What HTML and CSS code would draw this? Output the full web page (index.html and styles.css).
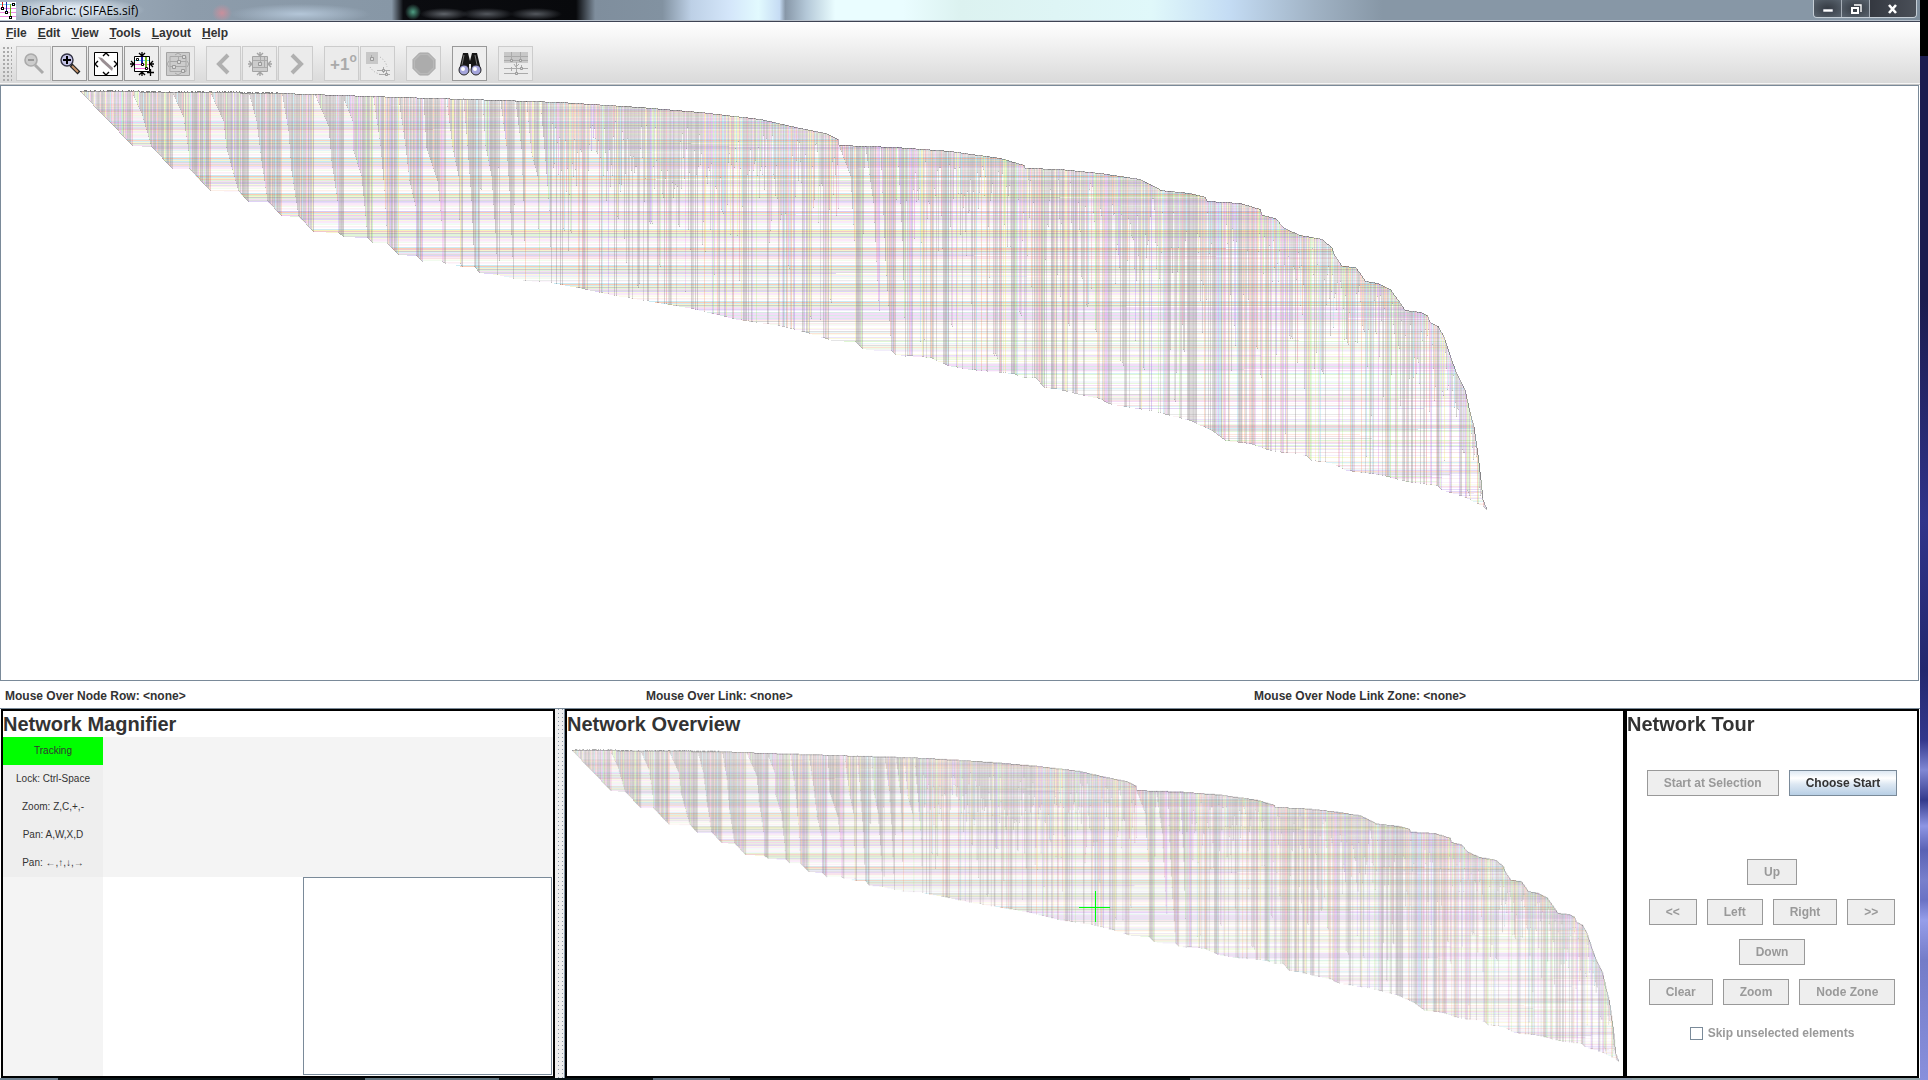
FILE: index.html
```html
<!DOCTYPE html>
<html lang="en">
<head>
<meta charset="utf-8">
<title>BioFabric: (SIFAEs.sif)</title>
<link rel="stylesheet" href="styles.css">
</head>
<body>
<div class="desktop">
  <div class="window">
    <header class="titlebar">
      <svg class="app-icon" viewBox="0 0 16 18" shape-rendering="crispEdges"><path fill="#fff" d="M0 0h16v18H0z"/><path fill="#7fe6f5" d="M0 2h16v1H0z"/><path fill="#f08be0" d="M0 6h16v1H0zM0 10h16v1H0zM0 14h16v1H0z"/><path fill="#c22" d="M2 0h1v6H2z"/><path fill="#22a" d="M6 0h1v10H6z"/><path fill="#6a1" d="M10 2h1v14h-1z"/><path fill="#000" d="M1 5h3v3H1zM5 9h3v3H5zM9 14h3v3H9zM12 1h3v3h-3z"/><path fill="#fff" d="M2 6h1v1H2zM6 10h1v1H6zM10 15h1v1h-1zM13 2h1v1h-1z"/></svg>
      <h1 class="title">BioFabric: (SIFAEs.sif)</h1>
      <div class="caption">
        <button class="cap" aria-label="Minimize"><svg width="12" height="10" viewBox="0 0 12 10"><path d="M1 5h10v3H1z" fill="#fff" stroke="#444a5a" stroke-width=".6"/></svg></button>
        <button class="cap" aria-label="Restore"><svg width="12" height="12" viewBox="0 0 12 12" fill="none"><path d="M4 2h7v7" stroke="#fff" stroke-width="1.4"/><path d="M2 5h6v5H2z" stroke="#fff" stroke-width="2"/></svg></button>
        <button class="cap cap-close" aria-label="Close"><svg width="12" height="10" viewBox="0 0 12 10"><path d="M2 1l7 8M9 1L2 9" stroke="#fff" stroke-width="2.6"/></svg></button>
      </div>
    </header>
    <div class="bars">
      <nav class="menu">
        <a href="#file"><u>F</u>ile</a><a href="#edit"><u>E</u>dit</a><a href="#view"><u>V</u>iew</a><a href="#tools"><u>T</u>ools</a><a href="#layout"><u>L</u>ayout</a><a href="#help"><u>H</u>elp</a>
      </nav>
      <div class="toolbar">
        <span class="grip"></span>
        <div class="tools">
          <button class="tool" disabled aria-label="Zoom out"><svg viewBox="0 0 24 24"><circle cx="9" cy="8" r="6" fill="#ccc" stroke="#aaa" stroke-width="1.6"/><path d="M6 8h6" stroke="#999" stroke-width="2"/><path d="M13 13l8 8" stroke="#aaa" stroke-width="3"/></svg></button>
          <button class="tool" aria-label="Zoom in"><svg viewBox="0 0 24 24"><circle cx="9" cy="8" r="6" fill="#c4c4e8" stroke="#334" stroke-width="1.4"/><path d="M5 8h8M9 4v8" stroke="#000" stroke-width="2"/><path d="M13 13l8 8" stroke="#222" stroke-width="4"/><path d="M14 14l6 6" stroke="#c39268" stroke-width="2"/></svg></button>
          <button class="tool" aria-label="Zoom to all"><svg viewBox="0 0 24 24"><path fill="#fff" stroke="#000" d="M.5 .5h23v23H.5z"/><path d="M4 5l4 1 11 10-1 3L8 10z" fill="#998f93"/><path fill="none" stroke="#000" stroke-width="1.4" d="M9 4l3-3 3 3M9 20l3 3 3-3M4 9l-3 3 3 3M20 9l3 3-3 3"/></svg></button>
          <button class="tool" aria-label="Zoom to model"><svg viewBox="0 0 24 24"><path fill="#fff" stroke="#000" d="M4.500 4.500h15v15h-15z"/><path stroke="#4cd9ee" d="M5 8.500h14"/><path stroke="#ee6fd8" d="M5 12.500h14M5 16.500h14"/><path stroke="#22a" stroke-width="2" d="M12 5v7"/><path stroke="#7b2" stroke-width="2" d="M16 5v12"/><path fill="#fff" stroke="#000" d="M6.500 6.500h2v2h-2zM11.500 11.500h2v2h-2zM15.500 15.500h2v2h-2z"/><path fill="none" stroke="#000" stroke-width="1.300" d="M12 0v4M9 1l3 3 3-3M12 24v-4M9 23l3-3 3 3M0 12h4M1 9l3 3-3 3M24 12h-4M23 9l-3 3 3 3M17 20.500h7M20.500 17v7"/></svg></button>
          <button class="tool" disabled aria-label="Zoom to selected"><svg viewBox="0 0 24 24"><path fill="#ccc" stroke="#a4a4a4" d="M.5 .5h23v23H.5z"/><path fill="none" stroke="#a8a8a8" d="M4 4.500h16v15H4zM4 9.500h16M4 14.500h16M12.500 4v6M9 21l3 2 3-2M9 3l3-2 3 2M3 9l-2 3 2 3M21 9l2 3-2 3"/><path fill="#ddd" stroke="#999" d="M11.500 8.500h3v3h-3zM6.500 13.500h3v3h-3zM16.500 3.500h3v3h-3zM15.500 17.500h3v3h-3z"/></svg></button>
        </div>
        <div class="tools">
          <button class="tool" disabled aria-label="Previous selection"><svg viewBox="0 0 24 24"><path d="M16 3l-9 9 9 9" fill="none" stroke="#b0b0b0" stroke-width="4"/></svg></button>
          <button class="tool" disabled aria-label="Zoom to current selection"><svg viewBox="0 0 24 24"><path fill="#ccc" stroke="#a4a4a4" d="M4.500 4.500h15v15h-15z"/><path fill="none" stroke="#aaa" d="M5 8.500h14M5 15.500h14M12.500 5v7M16.500 5v11"/><path fill="none" stroke="#a4a4a4" stroke-width="1.400" d="M12 0v4M9 1l3 3 3-3M12 24v-4M9 23l3-3 3 3M0 12h4M1 9l3 3-3 3M24 12h-4M23 9l-3 3 3 3"/><path fill="#ddd" stroke="#999" d="M10.500 10.500h3v3h-3z"/></svg></button>
          <button class="tool" disabled aria-label="Next selection"><svg viewBox="0 0 24 24"><path d="M8 3l9 9-9 9" fill="none" stroke="#b0b0b0" stroke-width="4"/></svg></button>
        </div>
        <div class="tools">
          <button class="tool degree" disabled aria-label="Add first neighbors">+1<sup>o</sup></button>
          <button class="tool" disabled aria-label="Propagate down"><svg viewBox="0 0 24 24"><path fill="#c8c8c8" d="M0 0h12v12H0z"/><path fill="none" stroke="#aaa" d="M5.500 3v4M11 18.500h13M13 22.500h11M17.500 15v6M20.500 18v6"/><path fill="#ddd" stroke="#999" d="M4.500 5.500h3v3h-3zM16.500 17.500h2v2h-2zM19.500 21.500h2v2h-2z"/><path d="M14 5q6 4 7 10M4 15q4 6 10 7" fill="none" stroke="#aaa" stroke-dasharray="1 2"/></svg></button>
        </div>
        <div class="tools">
          <button class="tool" disabled aria-label="Cancel"><svg viewBox="0 0 24 24"><path d="M7.500 1h9L23 7.500v9L16.500 23h-9L1 16.500v-9z" fill="#b8b8b8" stroke="#a4a4a4"/><path d="M8.500 3h7l5.500 5.500v7L15.500 21h-7L3 15.500v-7z" fill="#acacac"/></svg></button>
        </div>
        <div class="tools">
          <button class="tool" aria-label="Search"><svg viewBox="0 0 24 24"><path d="M5 1h5l2 8 2-8h5l4 17H13v-6h-2v6H1z" fill="#161616"/><path d="M6 3L4 13M17 3l2 10" stroke="#777"/><circle cx="6" cy="18" r="5" fill="#a5a5dc" stroke="#222"/><circle cx="18" cy="18" r="5" fill="#a5a5dc" stroke="#222"/><circle cx="5" cy="17" r="2" fill="#fff"/><circle cx="17" cy="17" r="2" fill="#fff"/></svg></button>
        </div>
        <div class="tools">
          <button class="tool" disabled aria-label="Compare nodes"><svg viewBox="0 0 24 24"><path fill="#c8c8c8" d="M0 0h24v11H0z"/><path fill="none" stroke="#aaa" d="M0 4.500h24M0 8.500h24M0 16.500h24M0 21.500h24M7.500 0v8M16.500 0v8M12.500 10v12M7.500 15v4M17.500 13v4M10 12l2 3 3-3"/><path fill="#ddd" stroke="#999" d="M6.500 7.500h2v2h-2zM15.500 7.500h2v2h-2zM11.500 20.500h2v2h-2zM16.500 15.500h2v2h-2z"/></svg></button>
        </div>
      </div>
    </div>
    <main class="view"><canvas class="fabric" data-x="79" data-y="5" data-width="1918" data-scale="1" role="img" aria-label="Network"></canvas></main>
    <div class="status"><span>Mouse Over Node Row: &lt;none&gt;</span><span>Mouse Over Link: &lt;none&gt;</span><span>Mouse Over Node Link Zone: &lt;none&gt;</span></div>
    <div class="lower">
      <section class="panel magnifier">
        <h2>Network Magnifier</h2>
        <div class="mag-top">
          <ul class="keys"><li class="tracking">Tracking</li><li>Lock: Ctrl-Space</li><li>Zoom: Z,C,+,-</li><li>Pan: A,W,X,D</li><li>Pan: ←,↑,↓,→</li></ul>
        </div>
        <div class="mag-bottom"><div class="mag-side"></div><div class="mag-detail"></div></div>
      </section>
      <div class="divider"></div>
      <section class="panel overview">
        <h2>Network Overview</h2>
        <div class="plot"><canvas class="fabric" data-x="5" data-y="13" data-width="1056" data-scale="0.744" data-cross="528,170" role="img" aria-label="Network overview"></canvas></div>
      </section>
      <section class="panel tour">
        <h2>Network Tour</h2>
        <div class="row start"><button class="btn" disabled>Start at Selection</button><button class="btn primary">Choose Start</button></div>
        <div class="row"><button class="btn" disabled>Up</button></div>
        <div class="row"><button class="btn" disabled>&lt;&lt;</button><button class="btn" disabled>Left</button><button class="btn" disabled>Right</button><button class="btn" disabled>&gt;&gt;</button></div>
        <div class="row"><button class="btn" disabled>Down</button></div>
        <div class="row"><button class="btn" disabled>Clear</button><button class="btn" disabled>Zoom</button><button class="btn" disabled>Node Zone</button></div>
        <label class="skip"><input type="checkbox" disabled>Skip unselected elements</label>
      </section>
    </div>
    <div class="taskbar"></div>
  </div>
  <div class="wallpaper"></div>
</div>
<script src="fabric.js"></script>
</body>
</html>
```

FILE: styles.css
```css
* { box-sizing: border-box; }
body { margin: 0; font: bold 12px/16px "Liberation Sans", Arial, sans-serif; color: #333; background: #fff; }
button { font: inherit; padding: 0; margin: 0; }
h1, h2, ul { margin: 0; padding: 0; list-style: none; }

.desktop { display: flex; height: 100vh; overflow: hidden; }
.window { flex: 1; min-width: 0; display: flex; flex-direction: column; }
.wallpaper { width: 8px; background: linear-gradient(#000 0 56px, #1c1c4f 56px 300px, #30348a 520px, #23286e 670px, #33388c 740px, #8088d4 770px, #333a8c 800px, #8e96e4 826px, #5a62b4 850px, #7880cc 880px, #6a72c4 900px, #969eea 920px, #747cc8 960px, #8890dc 1080px); }

.titlebar { display: flex; align-items: center; height: 22px; flex: none; border-bottom: 1px solid #3e4454; box-shadow: inset 0 -1px #b9c2cc;
  background:
    radial-gradient(ellipse 70px 12px at 75px 10px, #dce6f0 30%, #dce6f000 100%),
    radial-gradient(ellipse 10px 9px at 222px 13px, #c98f9c, #c98f9c00),
    radial-gradient(ellipse 70px 10px at 300px 14px, #b4c6d8, #b4c6d800),
    radial-gradient(ellipse 8px 8px at 413px 12px, #4f9e83, #4f9e8300),
    radial-gradient(ellipse 24px 6px at 444px 14px, #60646a, #60646a00),
    radial-gradient(ellipse 26px 6px at 487px 14px, #54585e, #54585e00),
    radial-gradient(ellipse 26px 6px at 536px 14px, #54585e, #54585e00),
    linear-gradient(90deg, #a9b8c6 0, #8d9cab 10%, #8797a6 20.400%, #0b0c10 21%, #08090c 30%, #7f8e9d 31%, #8292a1 34.500%, #bdd0e6 36%, #d4e6fa 38%, #e2fafe 39.500%, #c6dcf4 40.600%, #8797a8 40.900%, #b4c8d8 42%, #eafdff 43.500%, #eafdff 47%, #dcf2f0 50%, #e0f8fa 60%, #c4dcf4 64%, #a0b2c4 68.500%, #8797a6 72%, #8797a6 96%, #7c8c9b 100%); }
.app-icon { width: 16px; height: 18px; flex: none; }
.title { margin-left: 5px; font: 12px/18px "Open Sans", "Noto Sans", sans-serif; color: #000; }
.caption { margin-left: auto; margin-right: 3px; align-self: flex-start; display: flex; height: 18px; border: 1px solid #c5ced6; border-top: 0; border-radius: 0 0 4px 4px; overflow: hidden; }
.cap { width: 28px; border: 0; border-right: 1px solid #a5adb6; background: radial-gradient(#343a42, #59636e); display: flex; align-items: center; justify-content: center; }
.cap-close { width: 46px; border-right: 0; background: linear-gradient(90deg, #343840, #4a4f58); }

.bars { flex: none; height: 63px; background: linear-gradient(#fff, #d9d9d9); border-bottom: 1px solid #c4c4c4; box-shadow: inset 0 -1px #f6f6f6; }
.menu { display: flex; gap: 11px; padding: 3px 6px 5px; }
.menu a { color: #333; text-decoration: none; }
.toolbar { display: flex; gap: 11px; }
.grip { width: 10px; height: 35px; margin: 0 -7px 0 2px; background: radial-gradient(circle, #aaa 0 1px, transparent 1px) 0 0 / 4px 4px; }
.tools { display: flex; gap: 1px; }
.tool { width: 35px; height: 35px; padding: 5px 4px 4px 5px; border: 1px solid #999; background: #eee; display: flex; }
.tool:disabled { border-color: #ccc; background: #ebebeb; color: #aaa; }
.tool svg { width: 24px; height: 24px; }
.degree { font-size: 17px; line-height: 26px; padding-right: 0; }
.degree sup { font-size: 12px; line-height: 12px; align-self: flex-start; }

.view { flex: 596 1 0; min-height: 0; border: 1px solid #7a8a99; margin-right: 1px; }
.fabric { display: block; width: 100%; height: 100%; }
.status { flex: none; display: grid; grid-template-columns: 641fr 608fr 666fr; padding: 7px 0 4px 5px; }

.lower { flex: 370 1 0; min-height: 0; display: flex; border-top: 1px solid #7a8a99; }
.panel { border: 2px solid #000; min-width: 0; display: flex; flex-direction: column; }
.panel h2 { font-size: 20px; line-height: 26px; flex: none; }
.magnifier { width: 554px; margin-left: 1px; }
.mag-top { background: #f4f4f4; }
.keys { width: 100px; background: #eee; font-weight: normal; font-size: 10px; line-height: 28px; text-align: center; }
.tracking { background: #0f0; }
.mag-bottom { flex: 1; display: flex; justify-content: space-between; }
.mag-side { width: 100px; background: #f4f4f4; }
.mag-detail { width: 249px; border: 1px solid #7a8a99; margin: 0 1px 1px 0; }
.divider { width: 10px; border-right: 1px solid #7a8a99; background: conic-gradient(from 270deg at 1px 1px, #8a98a6 90deg, transparent 0) 3px 0 / 4px 4px, #eee; }
.overview { flex: 1; }
.plot { flex: 1; min-height: 0; }
.tour { width: 294px; margin-right: 1px; }
.row { display: flex; justify-content: center; gap: 10px; margin-bottom: 14px; }
.start { margin: 33px 0 63px; }
.btn { height: 26px; padding: 0 16px; border: 1px solid #7a8a99; color: #333; }
.btn:disabled { background: #eee; border-color: #999; color: #999; }
.primary { background: linear-gradient(#dde8f3, #fff 30%, #dde8f3 55%, #b8cfe5); }
.skip { display: flex; align-items: center; justify-content: center; gap: 5px; color: #999; margin-top: 6px; }
.skip input { appearance: none; width: 13px; height: 13px; margin: 0; border: 1px solid #7a8a99; background: #fff; }
.taskbar { height: 2px; flex: none; background: linear-gradient(90deg, #6b8090 0 3%, #0a1418 3% 19%, #5e7480 19% 26%, #0a1418 26% 34%, #5c7080 34% 38%, #0a1418 38% 62%, #8d9aab 62% 85%, #8fa3a8 85%); }
```

FILE: fabric.js
```js
// Draws the network: one horizontal line per node, one vertical line per link.
// Model units are pixels of the main view, before the per-canvas offset.
const OX = 80, OY = 91;

// Upper edge of the network.
const ceiling = [[80,91],[200,92],[280,93],[400,97],[500,100],[560,102],[640,107],[700,112],[760,119],[800,128],[825,133],[838,139],
  [839,145],[895,147],[950,151],[1000,158],[1024,165],[1025,168],[1060,169],[1100,173],[1140,179],[1158,188],[1160,190],[1190,193],
  [1205,197],[1207,201],[1240,203],[1260,209],[1262,215],[1275,218],[1284,228],[1300,235],[1322,239],[1332,248],[1334,254],[1340,263],
  [1342,266],[1355,267],[1360,273],[1365,281],[1378,283],[1390,289],[1398,300],[1405,310],[1420,312],[1427,315],[1430,322],[1438,326],
  [1444,337],[1450,355],[1456,372],[1465,390],[1470,412],[1474,427],[1478,455],[1481,480],[1483,500],[1487,509]];

// Lower edge of the network.
const floor = [[80,91],[132,145],[151,146],[172,168],[188,168],[210,190],[238,191],[248,201],[267,201],[281,215],[298,216],[313,231],
  [338,232],[343,236],[367,237],[372,242],[387,243],[398,254],[416,255],[422,261],[442,261],[462,266],[474,266],[479,272],[497,274],
  [525,280],[551,282],[578,287],[615,295],[688,307],[738,319],[780,325],[810,333],[832,340],[855,341],[862,348],[877,350],[891,350],
  [895,354],[930,357],[948,365],[970,369],[1013,373],[1023,377],[1035,377],[1044,387],[1056,388],[1075,393],[1100,398],[1108,403],
  [1155,411],[1190,420],[1212,430],[1225,440],[1250,443],[1270,450],[1306,455],[1311,460],[1330,462],[1347,470],[1380,474],[1406,481],
  [1437,485],[1441,489],[1460,495],[1470,499],[1482,505],[1487,510]];

// Hub nodes: the slanted left edge of each one's links.
const hubs = [[[80,91],[132,145]],
  [[132,93],[141,112],[151,146],[172,168]],
  [[173,94],[183,116],[188,150],[189,168],[210,190]],
  [[211,94],[223,120],[226,147],[233,173],[238,190],[248,201]],
  [[249,94],[256,120],[261,160],[267,200],[281,215]],
  [[282,95],[288,130],[291,170],[298,215],[313,231]],
  [[315,95],[328,125],[331,160],[337,200],[338,232],[343,236]],
  [[343,97],[352,120],[353,150],[361,175],[365,215],[367,237],[372,242]],
  [[373,97],[380,145],[384,190],[387,243],[398,254]],
  [[398,97],[405,145],[409,180],[415,205],[416,255],[422,261]],
  [[423,98],[426,147],[437,180],[441,220],[442,261],[445,263]],
  [[446,98],[452,146],[458,175],[460,263],[462,266]],
  [[463,98],[467,145],[471,200],[474,266],[479,272]],
  [[482,99],[485,145],[491,175],[495,232],[497,274]],
  [[500,100],[506,145],[509,190],[513,278]],
  [[515,100],[521,148],[523,200],[525,280]],
  [[526,101],[531,152],[537,175],[539,281]],
  [[540,101],[545,160],[549,210],[551,282]],
  [[839,146],[850,175],[854,240],[855,341],[862,348]],
  [[865,146],[873,202],[878,300]],
  [[880,146],[885,260],[891,350],[895,354]],
  [[897,147],[902,240],[905,356]]];

// Later nodes with enough links to reach the lower edge as a solid strip.
const strips = [[930,932],[945,948],[1011,1014],[1034,1044],[1051,1056],[1062,1066],[1073,1076],[1105,1108],[1166,1169],[1187,1196],
  [1212,1225],[1237,1242],[1306,1311],[1395,1397],[1411,1412],[1437,1441]];

function at(line, x) {
  for (let i = 1; i < line.length; i++) {
    if (x <= line[i][0]) {
      const [ax, ay] = line[i - 1], [bx, by] = line[i];
      return Math.round(ay + (by - ay) * (x - ax) / (bx - ax || 1));
    }
  }
  return line[line.length - 1][1];
}

function random(seed) {
  return () => {
    seed = (seed * 1664525 + 1013904223) >>> 0;
    return seed / 4294967296;
  };
}

const hues = ['80,190,220', '240,120,60', '120,220,70', '210,90,210', '130,80,220', '230,220,60', '210,70,90', '90,90,95'];
// Colours repeat along the rows, strongest first.
const cycle = [['80,190,220', .3], ['240,110,50', .36], ['90,190,220', .3], ['230,220,90', .3], ['100,95,100', .32], ['120,200,90', .22],
  ['210,110,200', .22], ['100,100,105', .22], ['130,80,220', .26], ['220,230,90', .2], ['220,110,210', .16], ['230,120,220', .16],
  ['230,220,90', .08], ['120,220,90', .1], ['0,0,0', 0], ['230,120,160', .12], ['210,90,210', .06], ['0,0,0', 0]];

function build() {
  const rnd = random(77), marks = [];
  const bar = (x, y, w, h, rgb, a) => marks.push([x, y, w, h, `rgba(${rgb},${a.toFixed(2)})`]);

  for (let y = 94; y < 508; y++) {
    let left = 80, right = 1487;
    while (at(floor, left) < y) left++;
    while (at(ceiling, right) > y) right--;
    let rgb, a;
    if (y < 310) {
      [rgb, a] = cycle[(y + 5) % 18];
      if (y < 109) a *= .35;
      else if (y < 145) a = a * .7 + .05;
      if (rnd() < .25) rgb = hues[Math.floor(rnd() * 8)];
    } else {
      rgb = hues[Math.floor(rnd() * 8)];
      a = rnd() < .35 ? 0 : .05 + rnd() * .2;
      if ((y > 311 && y < 320) || (y > 363 && y < 371)) { rgb = y % 3 ? '205,110,225' : '90,170,150'; a = .24; }
    }
    if (a > 0 && rnd() < .18) right = Math.round(left + (right - left) * (.4 + rnd() * .6));
    if (a > 0) bar(left, y, right - left, 1, rgb, a);
  }

  const column = (x, end, strong) => {
    const top = at(ceiling, x);
    const tint = rnd() < (x > 1200 ? .5 : .35);
    const rgb = tint ? hues[Math.floor(rnd() * 7)] : '112,102,106';
    bar(x, top, 1, Math.max(1, end - top), rgb, (tint ? .15 : strong ? .22 : .16) + rnd() * .14);
    bar(x, end, 1, 1, '80,75,80', .35);
  };

  const covered = new Set();
  for (const hub of hubs) {
    const last = hub[hub.length - 1][0];
    for (let x = hub[0][0]; x <= last; x++) {
      if (covered.has(x)) continue;
      covered.add(x);
      column(x, at(hub, x), true);
    }
  }
  for (const [a, b] of strips) {
    for (let x = a; x <= b; x++) { covered.add(x); column(x, at(floor, x), true); }
  }

  let x = 445;
  while (x < 1487) {
    const width = 1 + Math.floor(rnd() * 3), pick = rnd();
    for (let i = 0; i < width && x < 1487; i++, x++) {
      if (covered.has(x)) continue;
      const top = at(ceiling, x), bottom = at(floor, x), depth = bottom - top;
      // Short links thin out gradually below the upper edge.
      let end = top + 10 + rnd() * rnd() * depth * .7;
      if (x < 839) end = Math.max(end, 122 + rnd() * rnd() * 90);
      if (pick > .3) end = top + depth * (.25 + Math.floor(pick * 97 % 7) / 9) + i * 2;
      if (pick > .6) end = bottom;
      if (pick > .3 && rnd() < .22) end = top + 10 + rnd() * depth * .4;
      column(x, Math.min(bottom, Math.round(end)), false);
    }
  }

  for (x = 80; x < 1487; x++) {
    const y = at(ceiling, x), next = at(ceiling, x + 1);
    bar(x, y, 1, Math.max(1, Math.min(12, next - y)), '70,70,74', .3 + rnd() * .3);
    // Names above the first rows shrink to specks at this zoom.
    if (x > 83 && x < 282 && rnd() < .45) bar(x, y - 1, 1, 1, '40,40,40', .6);
  }
  return marks;
}

const marks = build();

function draw(canvas) {
  const w = canvas.clientWidth, h = canvas.clientHeight, d = canvas.dataset;
  canvas.width = w;
  canvas.height = h;
  const fit = w / d.width, g = canvas.getContext('2d');
  // Snap to whole pixels when the size is a rounding error away from nominal.
  const snapped = Math.abs(fit - 1) < .002 ? 1 : fit, scale = d.scale * snapped;
  g.setTransform(scale, 0, 0, scale, d.x * snapped, +d.y);
  for (const [x, y, mw, mh, color] of marks) {
    g.fillStyle = color;
    g.fillRect(x - OX, y - OY, mw, mh);
  }
  g.setTransform(1, 0, 0, 1, 0, 0);
  if (d.cross) {
    const [cx, cy] = d.cross.split(',').map(v => Math.round(v * snapped));
    g.fillStyle = '#0f0';
    g.fillRect(cx - 16, cy, 31, 1);
    g.fillRect(cx, cy - 16, 1, 31);
  }
}

const drawAll = () => document.querySelectorAll('.fabric').forEach(draw);
drawAll();
addEventListener('resize', drawAll);
```
